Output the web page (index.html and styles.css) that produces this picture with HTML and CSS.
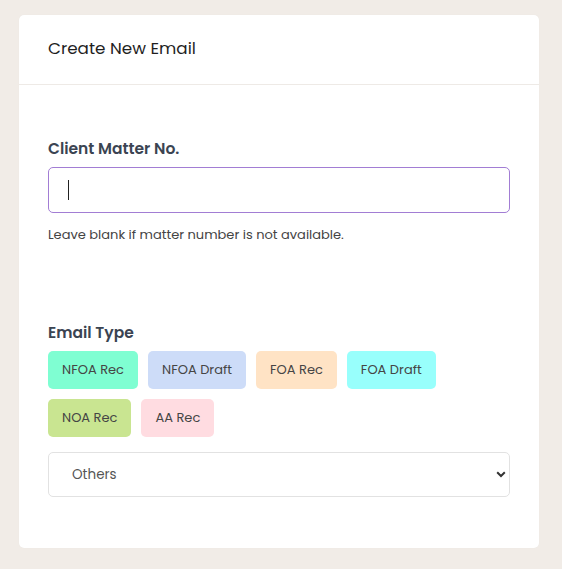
FILE: index.html
```html
<!DOCTYPE html>
<html lang="en">
<head>
<meta charset="utf-8">
<title>Create New Email</title>
<link rel="stylesheet" href="styles.css">
</head>
<body>
<div class="page">
  <div class="card">
    <div class="card-header">Create New Email</div>
    <div class="card-body">
      <div class="field">
        <label class="label" for="matter">Client Matter No.</label>
        <div class="input-wrap">
          <input id="matter" class="input" type="text">
          <span class="caret"></span>
        </div>
        <p class="help">Leave blank if matter number is not available.</p>
      </div>
      <div class="field type-field">
        <div class="label">Email Type</div>
        <div class="chips">
          <button class="chip chip-nfoa-rec">NFOA Rec</button>
          <button class="chip chip-nfoa-draft">NFOA Draft</button>
          <button class="chip chip-foa-rec">FOA Rec</button>
          <button class="chip chip-foa-draft">FOA Draft</button>
          <button class="chip chip-noa-rec">NOA Rec</button>
          <button class="chip chip-aa-rec">AA Rec</button>
        </div>
        <div class="select-wrap">
          <select class="select">
            <option>Others</option>
          </select>
          <svg class="chev" width="10" height="7" viewBox="0 0 10 7"><path d="M1.2 1.3 L5 5 L8.8 1.3" fill="none" stroke="#333" stroke-width="2"/></svg>
        </div>
      </div>
    </div>
  </div>
</div>
</body>
</html>
```
FILE: styles.css
```css
* { box-sizing: border-box; }
html, body { margin: 0; padding: 0; }
body {
  background: #f1ece7;
  font-family: "Poppins", Inter, "Noto Sans", sans-serif;
  color: #333;
}
.page { padding: 15px 23px 21px 19px; }
.card {
  background: #fff;
  border-radius: 5px;
  width: 520px;
  box-shadow: 0 0 1px rgba(0,0,0,0.05);
}
.card-header {
  height: 70px;
  padding: 0 29px 3px;
  display: flex;
  align-items: center;
  font-size: 16.8px;
  font-weight: 400;
  color: #1f1f1f;
  border-bottom: 1px solid #eeeae6;
}
.card-body { padding: 54px 29px 51px; }
.label {
  display: block;
  font-size: 15.5px;
  font-weight: 600;
  color: #3b4452;
  line-height: 20px;
  margin-bottom: 8px;
}
.input-wrap { position: relative; }
.input {
  display: block;
  width: 462px;
  height: 46px;
  border: 1px solid #a27dd4;
  border-radius: 5px;
  padding: 0 20px;
  font: inherit;
  outline: none;
}
.caret {
  position: absolute;
  left: 20px;
  top: 13px;
  width: 1px;
  height: 20px;
  background: #222;
}
.help {
  margin: 13px 0 0;
  font-size: 13px;
  color: #444;
  line-height: 18px;
}
.type-field { margin-top: 79px; }
.type-field .label { margin-bottom: 8px; }
.chips {
  display: flex;
  flex-wrap: wrap;
  gap: 10px;
  width: 430px;
}
.chip {
  height: 38px;
  border: none;
  border-radius: 5px;
  padding: 0 14px;
  font: inherit;
  font-size: 13px;
  color: #454545;
  cursor: pointer;
}
.chip-nfoa-rec { background: #7ffed2; }
.chip-nfoa-draft { background: #cddcf8; }
.chip-foa-rec { background: #ffe3c5; }
.chip-foa-draft { background: #98fffc; }
.chip-noa-rec { background: #c9e591; }
.chip-aa-rec { background: #ffdce1; }
.select-wrap { position: relative; margin-top: 15px; }
.select {
  display: block;
  width: 462px;
  height: 45px;
  appearance: none;
  -webkit-appearance: none;
  background: #fff;
  border: 1px solid #e2e2e2;
  border-radius: 5px;
  padding: 0 23px;
  font: inherit;
  font-size: 13.5px;
  color: #555;
  outline: none;
}
.chev {
  position: absolute;
  right: 4px;
  top: 19px;
}
```
